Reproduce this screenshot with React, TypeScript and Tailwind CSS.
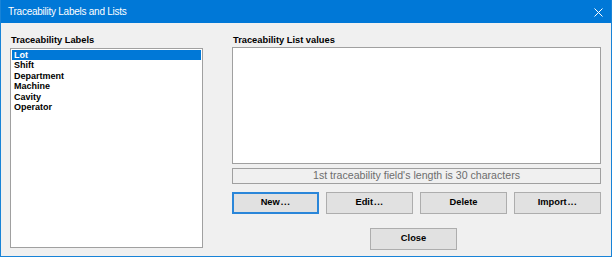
import React from "react";

const items = ["Lot", "Shift", "Department", "Machine", "Cavity", "Operator"];

function Btn({ label, dots, def }: { label: string; dots?: boolean; def?: boolean }) {
  return (
    <div
      className={
        "w-[87px] h-[22px] flex items-center justify-center bg-[#e1e1e1] text-[9.3px] font-bold text-black " +
        (def ? "border-2 border-[#2a86d9]" : "border border-[#adadad]")
      }
    >
      {label}
      {dots && <span className="tracking-[0.6px] ml-[1px]">...</span>}
    </div>
  );
}

export default function App() {
  return (
    <div
      className="w-[612px] h-[257px] bg-[#f0f0f0] border-x border-b border-[#1883d7] flex flex-col overflow-hidden"
      style={{ fontFamily: '"Liberation Sans", Arial, sans-serif' }}
    >
      <div className="h-[23px] -mx-px bg-[#0078d7] flex items-center justify-between pl-[8px] pr-[9px] shrink-0">
        <span className="text-white text-[10px] tracking-[-0.25px] leading-none">
          Traceability Labels and Lists
        </span>
        <svg width="9" height="9" viewBox="0 0 9 9" className="mt-[1px]">
          <path d="M0.5 0.5 L8.5 8.5 M8.5 0.5 L0.5 8.5" stroke="#fff" strokeWidth="1" />
        </svg>
      </div>
      <div className="flex pt-[11px] pl-[9px]">
        <div className="w-[193px] flex flex-col">
          <div className="h-[12px] leading-[12px] text-[9.3px] font-bold text-black pl-[1px]">Traceability Labels</div>
          <div className="mt-[2px] h-[200px] bg-white border border-[#a0a0a0] p-[1px]">
            {items.map((it, i) => (
              <div
                key={it}
                className={
                  "h-[10.4px] leading-[10.4px] text-[9px] font-bold pl-[2px] " +
                  (i === 0 ? "bg-[#0078d7] text-white" : "text-black")
                }
              >
                {it}
              </div>
            ))}
          </div>
        </div>
        <div className="ml-[29px] w-[369px] flex flex-col">
          <div className="h-[12px] leading-[12px] text-[9.3px] font-bold text-black pl-[1px]">Traceability List values</div>
          <div className="mt-[1px] h-[117px] bg-white border border-[#a0a0a0]" />
          <div className="mt-[4px] h-[16px] border border-[#a0a0a0] flex items-center justify-center text-[10.6px] text-[#6d6d6d]">
            1st traceability field's length is 30 characters
          </div>
          <div className="mt-[8px] flex gap-[7px]">
            <Btn label="New" dots def />
            <Btn label="Edit" dots />
            <Btn label="Delete" />
            <Btn label="Import" dots />
          </div>
          <div className="mt-[14px] ml-[138px]">
            <Btn label="Close" />
          </div>
        </div>
      </div>
    </div>
  );
}
